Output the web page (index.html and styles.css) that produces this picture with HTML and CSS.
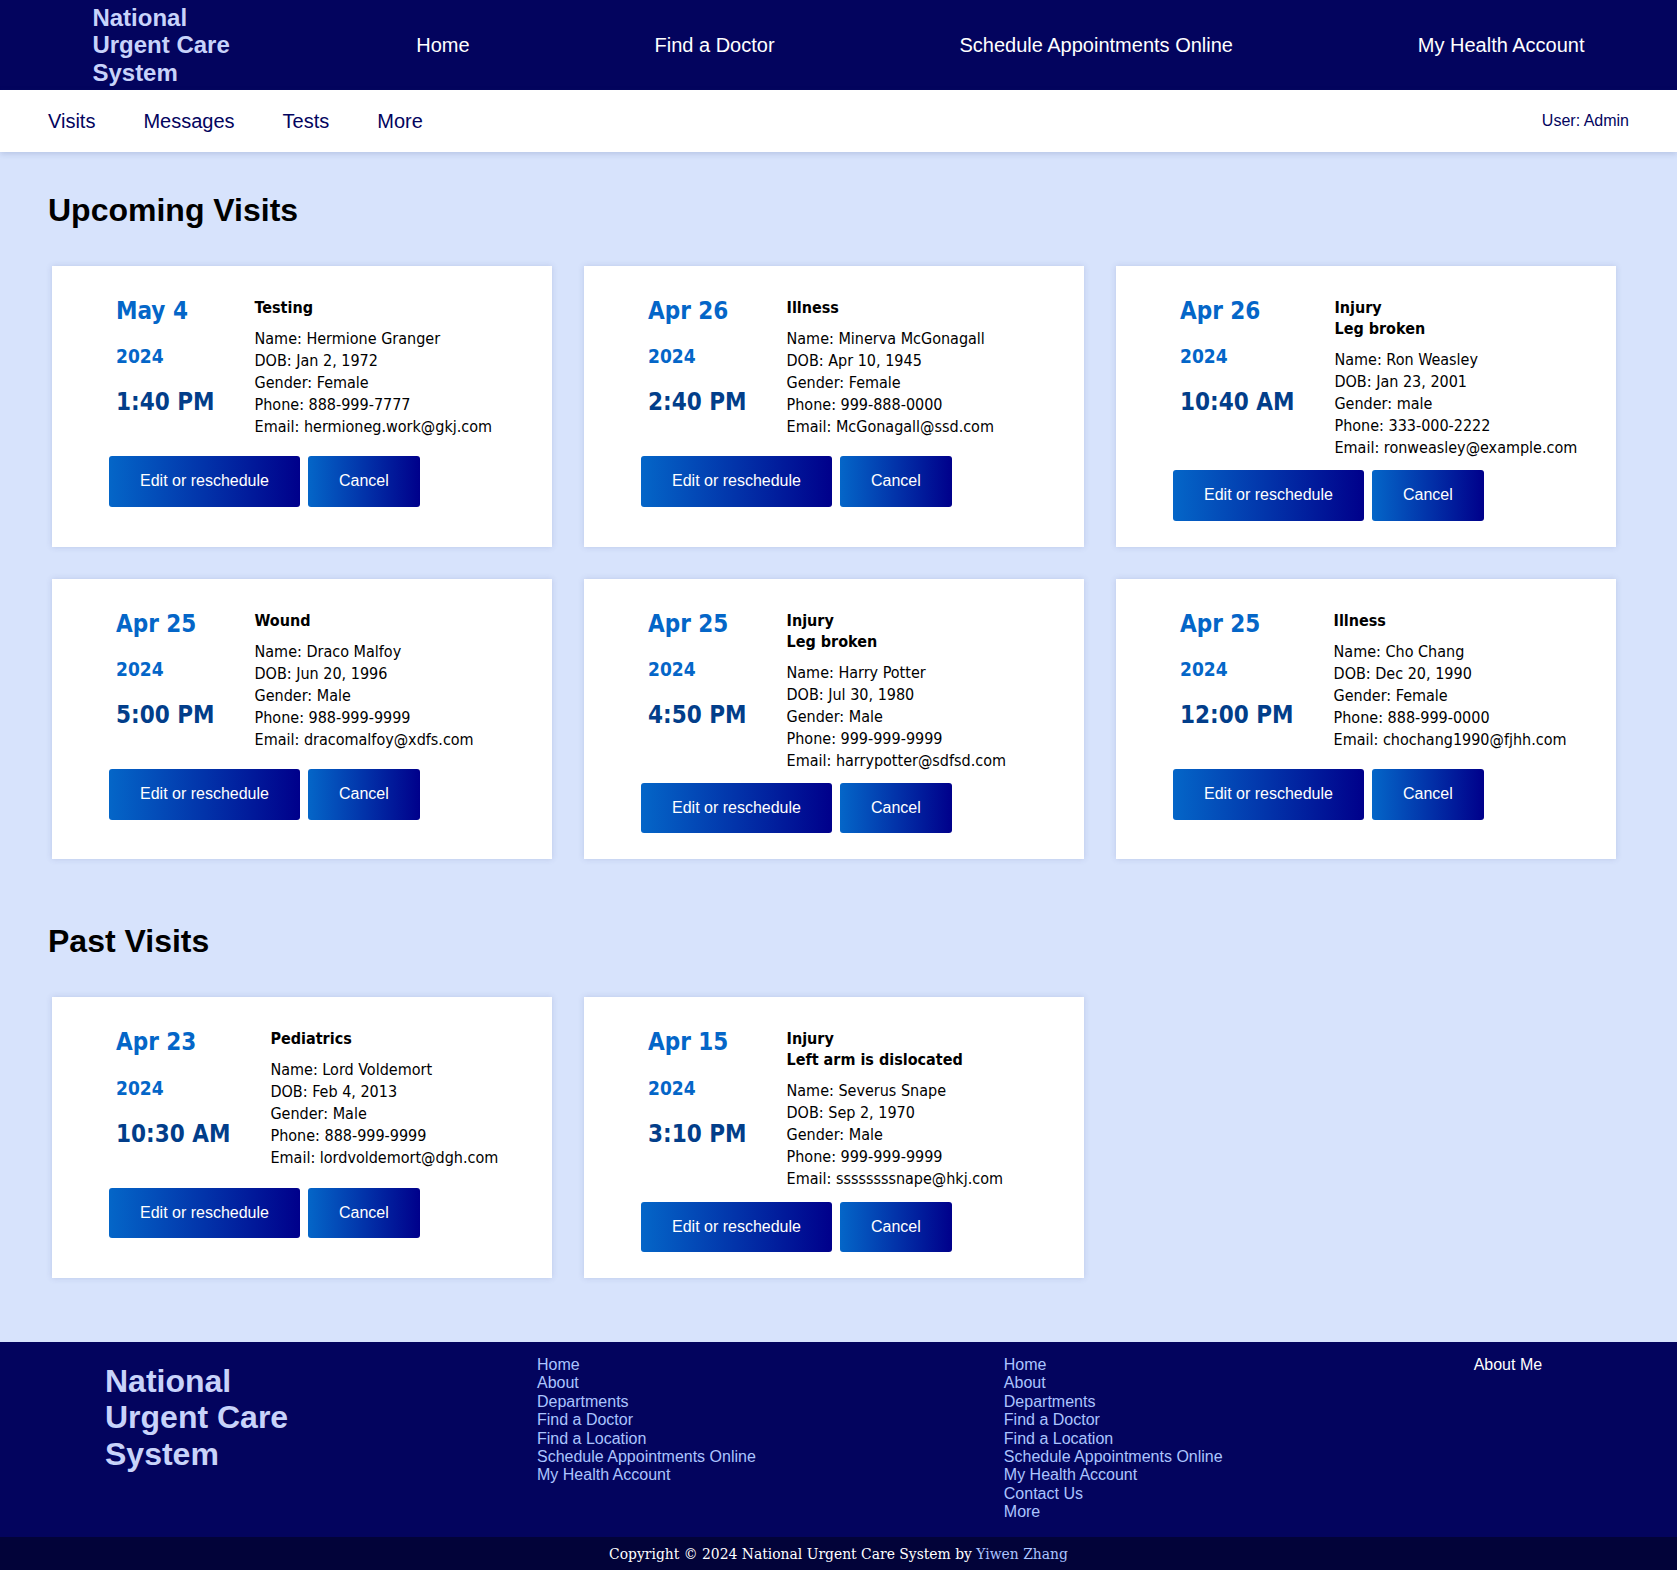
FILE: index.html
```html
<!DOCTYPE html>
<html lang="en">
<head>
<meta charset="utf-8">
<title>Visits - National Urgent Care System</title>
<link rel="stylesheet" href="styles.css">
</head>
<body>
<header class="topbar">
  <div class="brand">National Urgent Care System</div>
  <a class="topbar-link" href="#">Home</a>
  <a class="topbar-link" href="#">Find a Doctor</a>
  <a class="topbar-link" href="#">Schedule Appointments Online</a>
  <a class="topbar-link" href="#">My Health Account</a>
</header>
<nav class="subnav">
  <div class="subnav-links">
    <a href="#">Visits</a>
    <a href="#">Messages</a>
    <a href="#">Tests</a>
    <a href="#">More</a>
  </div>
  <span class="user">User: Admin</span>
</nav>
<main class="content">
  <section class="visits">
    <h2 class="section-title">Upcoming Visits</h2>
    <div class="card-grid">
      <div class="card">
        <div class="card-row">
          <div class="when"><div class="date">May 4</div><div class="year">2024</div><div class="time">1:40 PM</div></div>
          <div class="info"><div class="reason">Testing</div>
            <div class="details">Name: Hermione Granger<br>DOB: Jan 2, 1972<br>Gender: Female<br>Phone: 888-999-7777<br>Email: hermioneg.work@gkj.com</div></div>
        </div>
        <div class="actions"><button class="btn">Edit or reschedule</button><button class="btn">Cancel</button></div>
      </div>
      <div class="card">
        <div class="card-row">
          <div class="when"><div class="date">Apr 26</div><div class="year">2024</div><div class="time">2:40 PM</div></div>
          <div class="info"><div class="reason">Illness</div>
            <div class="details">Name: Minerva McGonagall<br>DOB: Apr 10, 1945<br>Gender: Female<br>Phone: 999-888-0000<br>Email: McGonagall@ssd.com</div></div>
        </div>
        <div class="actions"><button class="btn">Edit or reschedule</button><button class="btn">Cancel</button></div>
      </div>
      <div class="card">
        <div class="card-row">
          <div class="when"><div class="date">Apr 26</div><div class="year">2024</div><div class="time">10:40 AM</div></div>
          <div class="info"><div class="reason">Injury<br>Leg broken</div>
            <div class="details">Name: Ron Weasley<br>DOB: Jan 23, 2001<br>Gender: male<br>Phone: 333-000-2222<br>Email: ronweasley@example.com</div></div>
        </div>
        <div class="actions"><button class="btn">Edit or reschedule</button><button class="btn">Cancel</button></div>
      </div>
      <div class="card">
        <div class="card-row">
          <div class="when"><div class="date">Apr 25</div><div class="year">2024</div><div class="time">5:00 PM</div></div>
          <div class="info"><div class="reason">Wound</div>
            <div class="details">Name: Draco Malfoy<br>DOB: Jun 20, 1996<br>Gender: Male<br>Phone: 988-999-9999<br>Email: dracomalfoy@xdfs.com</div></div>
        </div>
        <div class="actions"><button class="btn">Edit or reschedule</button><button class="btn">Cancel</button></div>
      </div>
      <div class="card">
        <div class="card-row">
          <div class="when"><div class="date">Apr 25</div><div class="year">2024</div><div class="time">4:50 PM</div></div>
          <div class="info"><div class="reason">Injury<br>Leg broken</div>
            <div class="details">Name: Harry Potter<br>DOB: Jul 30, 1980<br>Gender: Male<br>Phone: 999-999-9999<br>Email: harrypotter@sdfsd.com</div></div>
        </div>
        <div class="actions"><button class="btn">Edit or reschedule</button><button class="btn">Cancel</button></div>
      </div>
      <div class="card">
        <div class="card-row">
          <div class="when"><div class="date">Apr 25</div><div class="year">2024</div><div class="time">12:00 PM</div></div>
          <div class="info"><div class="reason">Illness</div>
            <div class="details">Name: Cho Chang<br>DOB: Dec 20, 1990<br>Gender: Female<br>Phone: 888-999-0000<br>Email: chochang1990@fjhh.com</div></div>
        </div>
        <div class="actions"><button class="btn">Edit or reschedule</button><button class="btn">Cancel</button></div>
      </div>
    </div>
  </section>
  <section class="visits">
    <h2 class="section-title">Past Visits</h2>
    <div class="card-grid">
      <div class="card">
        <div class="card-row">
          <div class="when"><div class="date">Apr 23</div><div class="year">2024</div><div class="time">10:30 AM</div></div>
          <div class="info"><div class="reason">Pediatrics</div>
            <div class="details">Name: Lord Voldemort<br>DOB: Feb 4, 2013<br>Gender: Male<br>Phone: 888-999-9999<br>Email: lordvoldemort@dgh.com</div></div>
        </div>
        <div class="actions"><button class="btn">Edit or reschedule</button><button class="btn">Cancel</button></div>
      </div>
      <div class="card">
        <div class="card-row">
          <div class="when"><div class="date">Apr 15</div><div class="year">2024</div><div class="time">3:10 PM</div></div>
          <div class="info"><div class="reason">Injury<br>Left arm is dislocated</div>
            <div class="details">Name: Severus Snape<br>DOB: Sep 2, 1970<br>Gender: Male<br>Phone: 999-999-9999<br>Email: ssssssssnape@hkj.com</div></div>
        </div>
        <div class="actions"><button class="btn">Edit or reschedule</button><button class="btn">Cancel</button></div>
      </div>
    </div>
  </section>
</main>
<footer class="footer">
  <div class="footer-brand">National Urgent Care System</div>
  <div class="footer-links">
    <a href="#">Home</a><a href="#">About</a><a href="#">Departments</a><a href="#">Find a Doctor</a><a href="#">Find a Location</a><a href="#">Schedule Appointments Online</a><a href="#">My Health Account</a>
  </div>
  <div class="footer-links footer-more">
    <a href="#">Home</a><a href="#">About</a><a href="#">Departments</a><a href="#">Find a Doctor</a><a href="#">Find a Location</a><a href="#">Schedule Appointments Online</a><a href="#">My Health Account</a><a href="#">Contact Us</a><a href="#">More</a>
  </div>
  <div class="footer-links footer-about">
    <a href="#">About Me</a>
  </div>
</footer>
<div class="copyright">Copyright © 2024 National Urgent Care System by&nbsp;<a href="#">Yiwen Zhang</a></div>
</body>
</html>
```
FILE: styles.css
```css
* { box-sizing: border-box; }
html, body { margin: 0; padding: 0; }
body {
  background: #d7e3fc;
  font-family: "Liberation Sans", Arial, sans-serif;
  color: #000;
}
a { text-decoration: none; }

.topbar {
  height: 90px;
  background: #03045e;
  display: flex;
  align-items: center;
  justify-content: space-around;
}
.brand {
  width: 139px;
  font-size: 24px;
  font-weight: bold;
  line-height: 27.6px;
  color: #c8d3fa;
}
.topbar-link {
  color: #fff;
  font-size: 20px;
}

.subnav {
  position: relative;
  height: 62px;
  background: #fff;
  display: flex;
  align-items: center;
  justify-content: space-between;
  padding: 0 48px;
  box-shadow: 0 2px 6px rgba(40, 60, 120, 0.18);
}
.subnav-links { display: flex; gap: 48px; }
.subnav-links a { color: #03045e; font-size: 20px; }
.user { color: #03045e; font-size: 16px; }

.content { padding: 40px 0 0 48px; }
.visits { margin-bottom: 64px; }
.section-title {
  margin: 0 0 37px;
  font-size: 32px;
  line-height: 36.8px;
  font-weight: bold;
}
.card-grid {
  display: flex;
  flex-wrap: wrap;
  gap: 32px;
  margin-left: 4px;
}
.card {
  width: 500px;
  background: #fff;
  padding: 20px 20px 26px 57px;
  box-shadow: 0 0 6px rgba(60, 80, 140, 0.18);
  font-family: "DejaVu Sans Condensed", "DejaVu Sans", Tahoma, sans-serif;
  font-stretch: condensed;
}
.card-row { display: flex; align-items: flex-start; }
.when {
  margin-left: 7px;
  margin-right: 40px;
  padding-bottom: 27.7px;
  font-weight: bold;
}
.date {
  margin-top: 11px;
  font-size: 24px;
  line-height: 29px;
  color: #0466c8;
}
.year {
  margin-top: 19.5px;
  font-size: 19px;
  line-height: 23px;
  color: #0466c8;
}
.time {
  margin-top: 20px;
  font-size: 24px;
  line-height: 29px;
  color: #023e8a;
}
.info { margin-top: 11px; font-size: 16px; }
.reason { font-weight: bold; line-height: 21px; }
.details { margin-top: 10px; line-height: 22px; }
.actions { display: flex; gap: 8px; margin-top: 11.4px; }
.btn {
  font-family: "Liberation Sans", Arial, sans-serif;
  font-size: 16px;
  line-height: 18.4px;
  color: #fff;
  border: none;
  border-radius: 3px;
  padding: 16px 31px;
  background: linear-gradient(to right, #0466c8, #00008b);
}

.footer {
  background: #03045e;
  display: flex;
  align-items: flex-start;
  gap: 246px;
  padding: 14px 0 15px 105px;
}
.footer-brand {
  width: 186px;
  margin-top: 6.6px;
  font-size: 32px;
  line-height: 36.8px;
  font-weight: bold;
  color: #c8d3fa;
}
.footer-links { display: flex; flex-direction: column; }
.footer-links a { color: #abc4ff; font-size: 16px; line-height: 18.4px; }
.footer-more { margin-left: 2px; }
.footer-about { margin-left: 5px; }
.footer-about a { color: #fff; }

.copyright {
  height: 34px;
  background: #020339;
  color: #fff;
  display: flex;
  align-items: center;
  justify-content: center;
  font-family: "DejaVu Serif", Georgia, serif;
  font-size: 13.9px;
}
.copyright a { color: #abc4ff; }
```
